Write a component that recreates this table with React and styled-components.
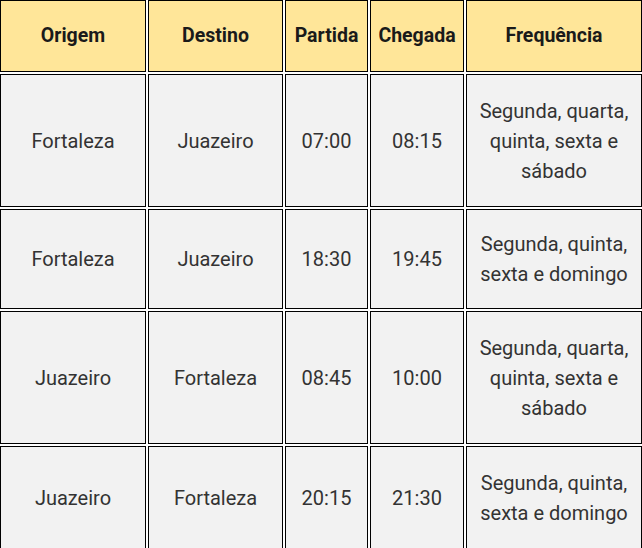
import React from 'react';
import styled, { createGlobalStyle } from 'styled-components';

const GlobalStyle = createGlobalStyle`
  body {
    margin: 0;
    background: #ffffff;
    font-family: Roboto, "Liberation Sans", sans-serif;
  }
`;

const Table = styled.div`
  display: grid;
  grid-template-columns: 146px 135px 83px 94px 176px;
  grid-template-rows: 72px 133px 100px 133px 103px;
  gap: 2px;
  width: 642px;
`;

const Cell = styled.div`
  display: flex;
  align-items: center;
  justify-content: center;
  text-align: center;
  border: 1px solid #000;
  padding: 0 ${p => (p.$head ? '3px' : '10px')};
  background: ${p => (p.$head ? '#ffe699' : '#f2f2f2')};
  color: ${p => (p.$head ? '#1a1a1a' : '#333333')};
  font-size: ${p => (p.$head ? '19.5px' : '20px')};
  font-weight: ${p => (p.$head ? 700 : 400)};
  line-height: 30px;
`;

const headers = ['Origem', 'Destino', 'Partida', 'Chegada', 'Frequência'];

const rows = [
  ['Fortaleza', 'Juazeiro', '07:00', '08:15', 'Segunda, quarta, quinta, sexta e sábado'],
  ['Fortaleza', 'Juazeiro', '18:30', '19:45', 'Segunda, quinta, sexta e domingo'],
  ['Juazeiro', 'Fortaleza', '08:45', '10:00', 'Segunda, quarta, quinta, sexta e sábado'],
  ['Juazeiro', 'Fortaleza', '20:15', '21:30', 'Segunda, quinta, sexta e domingo'],
];

export default function App() {
  return (
    <>
      <GlobalStyle />
      <Table>
        {headers.map(h => (
          <Cell key={h} $head>{h}</Cell>
        ))}
        {rows.map((r, i) =>
          r.map((c, j) => <Cell key={i + '-' + j}>{c}</Cell>)
        )}
      </Table>
    </>
  );
}
